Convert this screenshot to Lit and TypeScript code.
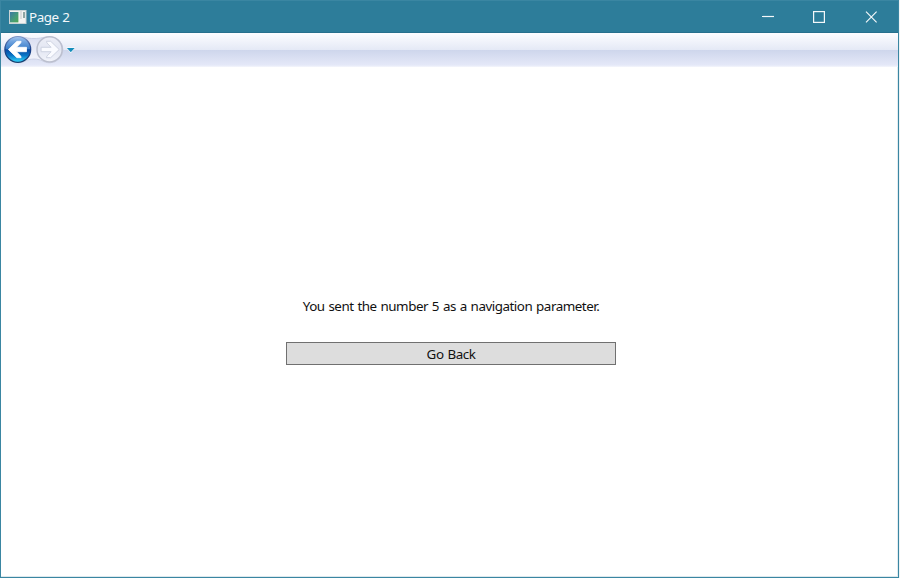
import { LitElement, html, css } from "lit";
import { customElement, property } from "lit/decorators.js";

@customElement("title-bar")
class TitleBar extends LitElement {
  @property() heading = "";
  static styles = css`
    :host { display: flex; height: 32px; box-sizing: border-box; align-items: center; padding: 0 1px 0 8px; background: #2d7d9a; border-bottom: 1px solid #27708d; color: #f4f8fa; }
    svg { display: block; }
    .title { flex: 1; margin-left: 2px; font-size: 13.4px; letter-spacing: -0.45px; word-spacing: 0.5px; line-height: 20px; padding-top: 1px; }
    .controls { display: flex; height: 31px; }
    .control { width: 52px; display: flex; align-items: center; justify-content: center; }
  `;
  render() {
    return html`
      <svg width="18" height="14" viewBox="0 0 18 14">
        <defs><linearGradient id="pic" x1="0" y1="0" x2="1" y2="1"><stop offset="0" stop-color="#3c79a5"/><stop offset=".6" stop-color="#479d75"/><stop offset="1" stop-color="#4fa453"/></linearGradient></defs>
        <rect x=".5" y=".5" width="16.5" height="13" fill="#f3f3f1" stroke="#c9d3d5"/>
        <rect x="1" y="2" width="8.4" height="10.4" fill="url(#pic)"/>
        <path d="M11 2h2M11 4h2M11 6h2M11 8h2" stroke="#c4c8ca"/>
        <rect x="14" y="2" width="2" height="6" fill="#8fa5a3"/>
      </svg>
      <div class="title">${this.heading}</div>
      <div class="controls">
        <div class="control"><svg width="14" height="12" viewBox="0 0 14 12"><path d="M2 5.5h12" stroke="#f4f8fa" stroke-width="1.2"/></svg></div>
        <div class="control"><svg width="12" height="12" viewBox="0 0 12 12"><rect x=".6" y=".6" width="10.8" height="10.8" fill="none" stroke="#f4f8fa" stroke-width="1.2"/></svg></div>
        <div class="control"><svg width="14" height="12" viewBox="0 0 14 12"><path d="M2 .7l10.6 10.6M12.6.7L2 11.3" stroke="#f4f8fa" stroke-width="1.15"/></svg></div>
      </div>`;
  }
}

@customElement("nav-bar")
class NavBar extends LitElement {
  static styles = css`
    :host { display: block; height: 34px; background: linear-gradient(#fdfdff 0, #e4e9f6 17px, #ced6ec 17px, #e4e8f8 32px, #f5f6fc 34px); }
    svg { display: block; }
  `;
  render() {
    return html`
      <svg width="80" height="34" viewBox="1 33 80 34">
        <defs>
          <linearGradient id="track" x1="0" y1="0" x2="0" y2="1"><stop offset="0" stop-color="#d9ddf0"/><stop offset="1" stop-color="#f6f7fd"/></linearGradient>
          <linearGradient id="blue" x1="0" y1="0" x2="0" y2="1"><stop offset="0" stop-color="#a8c7ee"/><stop offset=".2" stop-color="#6fa3df"/><stop offset=".49" stop-color="#397cc8"/><stop offset=".51" stop-color="#0747a1"/><stop offset=".73" stop-color="#0875c6"/><stop offset="1" stop-color="#35dcff"/></linearGradient>
          <linearGradient id="ring" x1="0" y1="0" x2="0" y2="1"><stop offset="0" stop-color="#7f96c6"/><stop offset=".5" stop-color="#173d88"/><stop offset="1" stop-color="#164070"/></linearGradient>
          <linearGradient id="pale" x1="0" y1="0" x2="0" y2="1"><stop offset="0" stop-color="#eceef7"/><stop offset=".5" stop-color="#e3e6f2"/><stop offset="1" stop-color="#f2f4fb"/></linearGradient>
        </defs>
        <path d="M18 36.8C25 36.8 26 38.5 34 38.5S43 36.8 50 36.8A13 13 0 0 1 50 62.8C43 62.8 42 59 34 59S25 62.8 18 62.8Z" fill="url(#track)" stroke="#c6cbe1" stroke-width=".8"/>
        <circle cx="17.8" cy="49.4" r="12.9" fill="url(#blue)" stroke="url(#ring)" stroke-width="1.2"/>
        <path d="M8.4 49.5l8.5-8.2h4.2l-.4 1.6-4.2 4.4h10v4.4h-10l4.2 4.4.4 1.6h-4.2Z" fill="#fff" stroke="#fff" stroke-width=".8" stroke-linejoin="round"/>
        <circle cx="49.6" cy="49.4" r="12.6" fill="url(#pale)" stroke="#bbbfce" stroke-width="1.5"/>
        <path d="M59.2 49.5l-8.5-8.2h-4.2l.4 1.6 4.2 4.4h-10v4.4h10l-4.2 4.4-.4 1.6h4.2Z" fill="#fafbff" stroke="#cbd0df" stroke-width=".9" stroke-linejoin="round"/>
        <path d="M66.2 47.6h9.2l-4.6 5.7Z" fill="#fff"/>
        <path d="M66.9 47.9h7.8l-3.9 4.4Z" fill="#158dbb"/>
      </svg>`;
  }
}

@customElement("app-root")
class AppRoot extends LitElement {
  static styles = css`
    :host { display: block; width: 900px; height: 578px; background: #eef4f6; overflow: hidden; font-family: "Noto Sans", sans-serif; }
    .window { width: 899px; height: 578px; box-sizing: border-box; border: 1px solid #3a86a2; display: flex; flex-direction: column; background: #fff; }
    .page { flex: 1; box-sizing: border-box; padding-top: 229px; display: flex; flex-direction: column; align-items: center; border-right: 1px solid #e2ecf0; border-bottom: 1px solid #dce8ed; color: #111; }
    .message { margin: 0 0 26px 4px; font-size: 13.4px; letter-spacing: -0.48px; word-spacing: 0.85px; line-height: 20px; white-space: nowrap; }
    .back { width: 330px; height: 23px; margin-left: 4px; box-sizing: border-box; padding: 1px 0 0; border: 1px solid #707070; background: #ddd; color: #111; font: 13.4px/20px "Noto Sans", sans-serif; letter-spacing: -0.45px; word-spacing: 0.85px; }
  `;
  render() {
    return html`
      <div class="window">
        <title-bar heading="Page 2"></title-bar>
        <nav-bar></nav-bar>
        <main class="page">
          <p class="message">You sent the number 5 as a navigation parameter.</p>
          <button class="back">Go Back</button>
        </main>
      </div>`;
  }
}
